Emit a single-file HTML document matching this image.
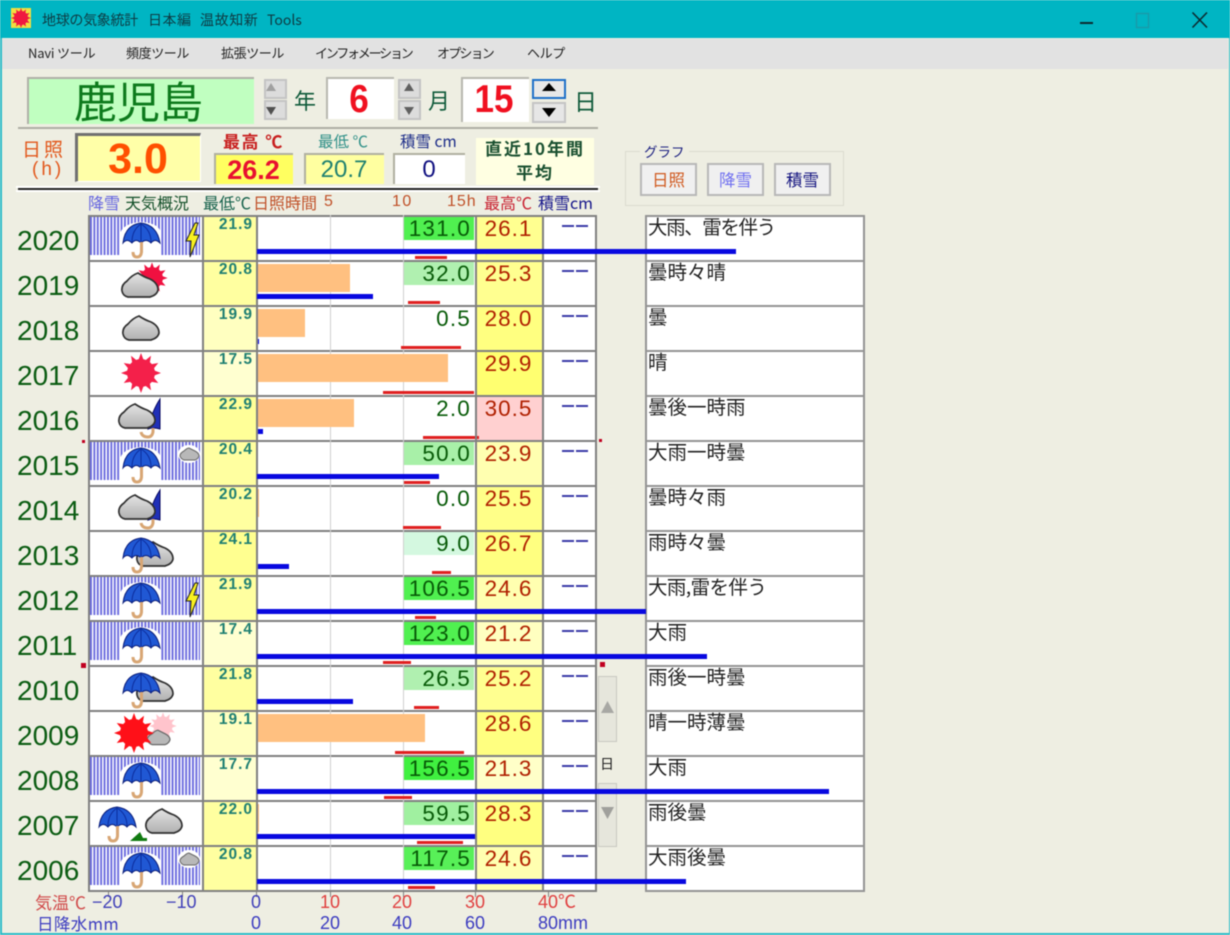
<!DOCTYPE html>
<html lang="ja">
<head>
<meta charset="utf-8">
<title>地球の気象統計 日本編 温故知新 Tools</title>
<style>
html,body{margin:0;padding:0;background:#eeeee2;}
#w{position:relative;width:1230px;height:935px;overflow:hidden;background:#eeeee2;font-family:"Liberation Sans","Noto Sans CJK JP",sans-serif;filter:blur(.4px);}
#w div,#w span.a{position:absolute;white-space:nowrap;}
.j{font-family:"Noto Sans CJK JP","Liberation Sans",sans-serif;}
.m{top:43px;font-size:13px;line-height:20px;color:#222;letter-spacing:-.4px;font-family:"Noto Sans CJK JP",sans-serif;}
.ti{top:11px;font-size:14px;line-height:18px;color:#0e3a42;font-family:"Noto Sans CJK JP","Liberation Sans",sans-serif;}
.spin{background:#dcdcdc;border:2px solid #c4c4c4;box-sizing:border-box;}
.h{top:193px;font-size:16px;line-height:18px;font-family:"Noto Sans CJK JP","Liberation Sans",sans-serif;}
.hn{top:193px;font-size:16px;line-height:18px;color:#c05028;letter-spacing:1.5px;}
.r{left:0;width:1230px;height:45px;}
.y{left:17px;top:10px;font-size:28px;line-height:30px;color:#0b5c12;}
.ic{left:88px;top:-1px;width:115px;height:46px;background:#fff;border-top:2px solid #808080;box-sizing:border-box;}
.mn{left:203px;top:-1px;width:53px;height:46px;border-top:2px solid #808080;box-sizing:border-box;}
.mn b{position:absolute;right:3px;top:-1px;font-size:15.5px;line-height:18px;color:#1f7f72;letter-spacing:1px;}
.ch{left:256px;top:-1px;width:219px;height:46px;background:#fff;border-top:2px solid #808080;box-sizing:border-box;}
.g1,.g2{top:-1px;width:1px;height:46px;background:#cfcfcf;}
.g1{left:330px}.g2{left:403px}
.gb{left:404px;top:1px;width:70px;height:23px;}
.gv{right:759px;top:0;font-size:22.5px;line-height:26px;color:#075a07;letter-spacing:1.2px;}
.mx{left:475px;top:-1px;width:67px;height:46px;border-top:2px solid #808080;box-sizing:border-box;text-align:center;font-size:22.5px;line-height:24px;color:#b02000;letter-spacing:1px;}
.sn{left:542px;top:-1px;width:53px;height:46px;background:#fff;border-top:2px solid #808080;box-sizing:border-box;}
.sn span{position:absolute;left:20px;top:4px;width:27px;height:8px;}
.sn span::before,.sn span::after{content:"";position:absolute;top:4px;width:12px;height:2px;background:#3a3aa8;}
.sn span::before{left:0}.sn span::after{left:14px}
.tx{left:645px;top:-1px;width:218px;height:46px;background:#fff;border-top:2px solid #949494;box-sizing:border-box;padding-left:3px;font-size:19.5px;line-height:17px;color:#222;font-family:"Noto Sans CJK JP",sans-serif;}
.or{left:257px;top:3px;height:28px;background:#ffc080;}
.bl{left:257px;top:33px;height:5px;background:#0808e0;}
.rd{top:40px;height:2.5px;background:#e02020;}
.v{width:2px;background:#808080;top:215px;height:677px;}
.t{width:1px;height:6px;top:891px;background:#808080;}
.l1,.l2{font-size:18px;line-height:20px;}
.l1{top:892px;color:#e04040;}
.l2{top:913px;color:#3c3cc0;}
.btn{top:163px;width:57px;height:33px;background:#f0f0f0;border:2px solid #b8b8b8;box-sizing:border-box;text-align:center;font-size:16.5px;line-height:29px;font-family:"Noto Sans CJK JP",sans-serif;}
.bb{left:257px;height:5px;background:#0808e0;}
</style>
</head>
<body>
<div id="w">
<!-- title bar -->
<div style="left:0;top:0;width:1230px;height:38px;background:#00b5c3;"></div>
<div style="left:11px;top:8px;width:20px;height:20px;background:#f0e040;"></div>
<svg style="position:absolute;left:11px;top:8px" width="20" height="20" viewBox="-20 -20 40 40"><circle r="14" fill="#f01840"/><polygon fill="#f01840" points="20,0 11.6,3.1 17.3,10 8.5,8.5 10,17.3 3.1,11.6 0,20 -3.1,11.6 -10,17.3 -8.5,8.5 -17.3,10 -11.6,3.1 -20,0 -11.6,-3.1 -17.3,-10 -8.5,-8.5 -10,-17.3 -3.1,-11.6 0,-20 3.1,-11.6 10,-17.3 8.5,-8.5 17.3,-10 11.6,-3.1"/></svg>
<div class="ti" style="left:42px;letter-spacing:-.3px;">地球の気象統計</div>
<div class="ti" style="left:148px;letter-spacing:.5px;">日本編</div>
<div class="ti" style="left:200px;letter-spacing:.6px;">温故知新</div>
<div class="ti" style="left:267px;">Tools</div>
<svg style="position:absolute;left:1070px;top:8px" width="150" height="30"><rect x="10" y="14" width="13" height="2" fill="#0c2a30"/><rect x="66.5" y="5.5" width="12" height="14" fill="none" stroke="#1a9aa8" stroke-width="1.4"/><path d="M122.5 4.5L137 19.5M137 4.5L122.5 19.5" stroke="#0c2a30" stroke-width="1.6" fill="none"/></svg>
<!-- menu -->
<div style="left:2px;top:39px;width:1226px;height:30px;background:#e2e2e2;"></div>
<div class="m" style="left:28px;letter-spacing:-.2px;">Navi ツール</div>
<div class="m" style="left:126px;">頻度ツール</div>
<div class="m" style="left:221px;">拡張ツール</div>
<div class="m" style="left:315px;letter-spacing:-2.2px;">インフォメーション</div>
<div class="m" style="left:437px;letter-spacing:-1.8px;">オプション</div>
<div class="m" style="left:527px;">ヘルプ</div>
<!-- window border -->
<div style="left:0;top:38px;width:1.5px;height:897px;background:#2cbcc8;z-index:9;"></div>
<div style="left:1228.5px;top:38px;width:1.5px;height:897px;background:#2cbcc8;z-index:9;"></div>
<div style="left:0;top:933px;width:1230px;height:2px;background:#2cbcc8;z-index:9;"></div>
<!-- station -->
<div style="left:27px;top:77px;width:227px;height:47px;background:#c0ffc0;border-top:2px solid #b0b0a8;border-left:2px solid #b0b0a8;box-sizing:border-box;"></div>
<div class="j" style="left:74px;top:72px;font-size:43px;line-height:56px;color:#0d7a1c;">鹿児島</div>
<!-- spins -->
<div class="spin" style="left:264px;top:79px;width:23px;height:20px;"></div>
<div class="spin" style="left:264px;top:100px;width:23px;height:20px;"></div>
<div style="left:326px;top:77px;width:68px;height:42px;background:#fff;border-top:2px solid #b8b8b0;border-left:2px solid #b8b8b0;box-sizing:border-box;"></div>
<div class="spin" style="left:398px;top:79px;width:23px;height:20px;"></div>
<div class="spin" style="left:398px;top:100px;width:23px;height:20px;"></div>
<div style="left:461px;top:77px;width:68px;height:45px;background:#fff;border-top:2px solid #b8b8b0;border-left:2px solid #b8b8b0;box-sizing:border-box;"></div>
<div style="left:532px;top:79px;width:34px;height:20px;background:#e8e8e8;border:2px solid #1e70c8;box-sizing:border-box;"></div>
<div class="spin" style="left:532px;top:102px;width:34px;height:21px;background:#e6e6e6;"></div>
<svg style="position:absolute;left:260px;top:75px" width="320" height="52">
<g fill="#a0a0a0"><path d="M11 8l5 8h-10z"/></g><g fill="#505050"><path d="M6 32h10l-5 8z"/></g>
<g fill="#606060"><path d="M149 8l5 8h-10z"/><path d="M144 32h10l-5 8z"/></g>
<g fill="#000"><path d="M289 8l7 8h-14z"/><path d="M282 33h14l-7 9z"/></g></svg>
<div class="j" style="left:294px;top:85px;font-size:22px;line-height:30px;color:#0f5a3a;">年</div>
<div style="left:326px;top:76px;width:66px;text-align:center;font-size:39px;line-height:48px;font-weight:bold;color:#f01020;transform:scaleX(.9);">6</div>
<div class="j" style="left:428px;top:85px;font-size:22px;line-height:30px;color:#0f5a3a;">月</div>
<div style="left:461px;top:76px;width:66px;text-align:center;font-size:39px;line-height:48px;font-weight:bold;color:#f01020;transform:scaleX(.9);">15</div>
<div class="j" style="left:574px;top:85px;font-size:23px;line-height:30px;color:#0f5a3a;">日</div>
<!-- separators -->
<div style="left:18px;top:127px;width:580px;height:2px;background:#aeaea4;"></div>
<div style="left:18px;top:188px;width:580px;height:2px;background:#222;"></div>
<div style="left:16px;top:190px;width:584px;height:2px;background:#fff;"></div>
<div style="left:16px;top:186px;width:584px;height:2px;background:#fff;"></div>
<!-- summary -->
<div class="j" style="left:22px;top:136px;font-size:19px;line-height:26px;color:#e2581c;letter-spacing:3px;">日照</div>
<div style="left:32px;top:158px;font-size:19px;line-height:24px;color:#e2581c;letter-spacing:3px;">(h)</div>
<div style="left:75px;top:133px;width:126px;height:49px;background:#ffffa8;border-top:3px solid #707070;border-left:3px solid #707070;border-right:1px solid #fff;border-bottom:1px solid #fff;box-sizing:border-box;"></div>
<div style="left:75px;top:134px;width:126px;text-align:center;font-size:43px;line-height:50px;font-weight:bold;color:#ff5000;">3.0</div>
<div class="j" style="left:223px;top:130px;font-size:17px;line-height:22px;font-weight:bold;color:#c81e1e;letter-spacing:1.5px;">最高 ℃</div>
<div style="left:214px;top:153px;width:79px;height:31px;background:#ffff60;border-top:2px solid #b0b0a0;border-left:2px solid #b0b0a0;box-sizing:border-box;"></div>
<div style="left:214px;top:155px;width:79px;text-align:center;font-size:27px;line-height:30px;font-weight:bold;color:#e81030;">26.2</div>
<div class="j" style="left:318px;top:130px;font-size:15.5px;line-height:22px;color:#2f9088;">最低 ℃</div>
<div style="left:304px;top:153px;width:80px;height:31px;background:#ffffa0;border-top:2px solid #b0b0a0;border-left:2px solid #b0b0a0;box-sizing:border-box;"></div>
<div style="left:304px;top:155px;width:80px;text-align:center;font-size:24px;line-height:30px;color:#1f8070;">20.7</div>
<div class="j" style="left:400px;top:130px;font-size:15.5px;line-height:22px;color:#1c2c88;">積雪 cm</div>
<div style="left:393px;top:153px;width:72px;height:31px;background:#fff;border-top:2px solid #b0b0a0;border-left:2px solid #b0b0a0;box-sizing:border-box;"></div>
<div style="left:393px;top:155px;width:72px;text-align:center;font-size:24px;line-height:30px;color:#101080;">0</div>
<div style="left:476px;top:138px;width:118px;height:47px;background:#ffffe2;"></div>
<div class="j" style="left:476px;top:136px;width:118px;text-align:center;font-size:17px;line-height:24px;font-weight:bold;color:#1a5030;letter-spacing:2px;">直近10年間</div>
<div class="j" style="left:476px;top:160px;width:118px;text-align:center;font-size:17px;line-height:24px;font-weight:bold;color:#1a5030;letter-spacing:2px;">平均</div>
<!-- graph group -->
<div style="left:625px;top:151px;width:219px;height:55px;border:1px solid #dcdcd0;box-sizing:border-box;"></div>
<div class="j" style="left:640px;top:142px;padding:0 4px;font-size:13.5px;line-height:18px;background:#eeeee2;color:#1c2080;">グラフ</div>
<div class="btn" style="left:640px;color:#d05a20;">日照</div>
<div class="btn" style="left:707px;color:#7070f0;">降雪</div>
<div class="btn" style="left:774px;color:#161680;">積雪</div>
<!-- column headers -->
<div class="h" style="left:88px;color:#6464e0;">降雪</div>
<div class="h" style="left:125px;color:#14502a;">天気概況</div>
<div class="h" style="left:203px;color:#14604a;">最低℃</div>
<div class="h" style="left:253px;color:#c05028;">日照時間</div>
<div class="hn" style="left:324px;">5</div>
<div class="hn" style="left:392px;">10</div>
<div class="hn" style="left:447px;letter-spacing:1px;">15h</div>
<div class="h" style="left:484px;color:#c81e2e;">最高℃</div>
<div class="h" style="left:538px;color:#14148a;">積雪cm</div>

<!-- rows -->
<div class="r" style="top:216px"><div class="y">2020</div><div class="ic"></div><div class="mn" style="background:#ffffa0"><b>21.9</b></div><div class="ch"></div><div class="g1"></div><div class="g2"></div><div class="gb" style="background:#50f050"></div><div class="gv">131.0</div><div class="mx" style="background:#ffff90">26.1</div><div class="sn"><span></span></div><div class="tx" style="letter-spacing:-1.4px">大雨、雷を伴う</div><div class="rd" style="left:415px;width:32px"></div></div>
<div class="r" style="top:261px"><div class="y">2019</div><div class="ic"></div><div class="mn" style="background:#ffffa0"><b>20.8</b></div><div class="ch"></div><div class="g1"></div><div class="g2"></div><div class="or" style="width:93px"></div><div class="gb" style="background:#b0f0b0"></div><div class="gv">32.0</div><div class="mx" style="background:#ffff90">25.3</div><div class="sn"><span></span></div><div class="tx">曇時々晴</div><div class="rd" style="left:408px;width:32px"></div></div>
<div class="r" style="top:306px"><div class="y">2018</div><div class="ic"></div><div class="mn" style="background:#ffffc0"><b>19.9</b></div><div class="ch"></div><div class="g1"></div><div class="g2"></div><div class="or" style="width:48px"></div><div class="gv">0.5</div><div class="mx" style="background:#ffff80">28.0</div><div class="sn"><span></span></div><div class="tx">曇</div><div class="bl" style="width:2px"></div><div class="rd" style="left:401px;width:60px"></div></div>
<div class="r" style="top:351px"><div class="y">2017</div><div class="ic"></div><div class="mn" style="background:#ffffd0"><b>17.5</b></div><div class="ch"></div><div class="g1"></div><div class="g2"></div><div class="or" style="width:191px"></div><div class="mx" style="background:#ffff70">29.9</div><div class="sn"><span></span></div><div class="tx">晴</div><div class="rd" style="left:383px;width:91px"></div></div>
<div class="r" style="top:396px"><div class="y">2016</div><div class="ic"></div><div class="mn" style="background:#ffff98"><b>22.9</b></div><div class="ch"></div><div class="g1"></div><div class="g2"></div><div class="or" style="width:97px"></div><div class="gv">2.0</div><div class="mx" style="background:#ffd0d0">30.5</div><div class="sn"><span></span></div><div class="tx">曇後一時雨</div><div class="bl" style="width:6px"></div><div class="rd" style="left:423px;width:56px"></div></div>
<div class="r" style="top:441px"><div class="y">2015</div><div class="ic"></div><div class="mn" style="background:#ffffa0"><b>20.4</b></div><div class="ch"></div><div class="g1"></div><div class="g2"></div><div class="gb" style="background:#a8f0a8"></div><div class="gv">50.0</div><div class="mx" style="background:#ffffb0">23.9</div><div class="sn"><span></span></div><div class="tx">大雨一時曇</div><div class="rd" style="left:404px;width:26px"></div></div>
<div class="r" style="top:486px"><div class="y">2014</div><div class="ic"></div><div class="mn" style="background:#ffffa0"><b>20.2</b></div><div class="ch"></div><div class="g1"></div><div class="g2"></div><div class="or" style="width:2px"></div><div class="gv">0.0</div><div class="mx" style="background:#ffff88">25.5</div><div class="sn"><span></span></div><div class="tx">曇時々雨</div><div class="rd" style="left:403px;width:38px"></div></div>
<div class="r" style="top:531px"><div class="y">2013</div><div class="ic"></div><div class="mn" style="background:#ffff90"><b>24.1</b></div><div class="ch"></div><div class="g1"></div><div class="g2"></div><div class="gb" style="background:#d4f8e0"></div><div class="gv">9.0</div><div class="mx" style="background:#ffff80">26.7</div><div class="sn"><span></span></div><div class="tx">雨時々曇</div><div class="bl" style="width:32px"></div><div class="rd" style="left:432px;width:19px"></div></div>
<div class="r" style="top:576px"><div class="y">2012</div><div class="ic"></div><div class="mn" style="background:#ffffa0"><b>21.9</b></div><div class="ch"></div><div class="g1"></div><div class="g2"></div><div class="gb" style="background:#50f050"></div><div class="gv">106.5</div><div class="mx" style="background:#ffffb0">24.6</div><div class="sn"><span></span></div><div class="tx" style="letter-spacing:-.6px">大雨,雷を伴う</div><div class="rd" style="left:415px;width:21px"></div></div>
<div class="r" style="top:621px"><div class="y">2011</div><div class="ic"></div><div class="mn" style="background:#ffffd0"><b>17.4</b></div><div class="ch"></div><div class="g1"></div><div class="g2"></div><div class="gb" style="background:#50f050"></div><div class="gv">123.0</div><div class="mx" style="background:#ffffc0">21.2</div><div class="sn"><span></span></div><div class="tx">大雨</div><div class="rd" style="left:383px;width:28px"></div></div>
<div class="r" style="top:666px"><div class="y">2010</div><div class="ic"></div><div class="mn" style="background:#ffffa0"><b>21.8</b></div><div class="ch"></div><div class="g1"></div><div class="g2"></div><div class="gb" style="background:#b0f0b0"></div><div class="gv">26.5</div><div class="mx" style="background:#ffff90">25.2</div><div class="sn"><span></span></div><div class="tx">雨後一時曇</div><div class="rd" style="left:414px;width:25px"></div></div>
<div class="r" style="top:711px"><div class="y">2009</div><div class="ic"></div><div class="mn" style="background:#ffffc0"><b>19.1</b></div><div class="ch"></div><div class="g1"></div><div class="g2"></div><div class="or" style="width:168px"></div><div class="mx" style="background:#ffff80">28.6</div><div class="sn"><span></span></div><div class="tx">晴一時薄曇</div><div class="rd" style="left:395px;width:69px"></div></div>
<div class="r" style="top:756px"><div class="y">2008</div><div class="ic"></div><div class="mn" style="background:#ffffd0"><b>17.7</b></div><div class="ch"></div><div class="g1"></div><div class="g2"></div><div class="gb" style="background:#40f040"></div><div class="gv">156.5</div><div class="mx" style="background:#ffffc8">21.3</div><div class="sn"><span></span></div><div class="tx">大雨</div><div class="rd" style="left:384px;width:28px"></div></div>
<div class="r" style="top:801px"><div class="y">2007</div><div class="ic"></div><div class="mn" style="background:#ffffa0"><b>22.0</b></div><div class="ch"></div><div class="g1"></div><div class="g2"></div><div class="or" style="width:2px"></div><div class="gb" style="background:#a0f0a0"></div><div class="gv">59.5</div><div class="mx" style="background:#ffff80">28.3</div><div class="sn"><span></span></div><div class="tx">雨後曇</div><div class="rd" style="left:417px;width:46px"></div></div>
<div class="r" style="top:846px"><div class="y">2006</div><div class="ic"></div><div class="mn" style="background:#ffffa0"><b>20.8</b></div><div class="ch"></div><div class="g1"></div><div class="g2"></div><div class="or" style="width:1px"></div><div class="gb" style="background:#58f058"></div><div class="gv">117.5</div><div class="mx" style="background:#ffffb0">24.6</div><div class="sn"><span></span></div><div class="tx">大雨後曇</div><div class="rd" style="left:408px;width:27px"></div></div>

<!-- vertical frame lines -->
<div class="v" style="left:88px"></div>
<div class="v" style="left:202px"></div>
<div class="v" style="left:255.5px"></div>
<div class="v" style="left:474.5px"></div>
<div class="v" style="left:541.5px"></div>
<div class="v" style="left:595px"></div>
<div class="v" style="left:644.5px;background:#949494"></div>
<div class="v" style="left:862.5px;background:#949494"></div>
<div style="left:88px;top:890px;width:509px;height:2px;background:#808080;"></div>
<div style="left:645px;top:890px;width:219px;height:2px;background:#949494;"></div>

<!-- side scroller -->
<div style="left:598px;top:676px;width:19px;height:66px;background:#e6e6dc;border:1px solid #c8c8c0;box-sizing:border-box;"></div>
<div style="left:598px;top:783px;width:19px;height:64px;background:#e6e6dc;border:1px solid #c8c8c0;box-sizing:border-box;"></div>
<svg style="position:absolute;left:598px;top:695px" width="20" height="135"><path d="M3 18L9.5 6 16 18z" fill="#a8a8a4"/><path d="M3 112H16L9.5 124z" fill="#a0a09c"/></svg>
<div class="j" style="left:600px;top:754px;font-size:14px;line-height:20px;color:#222;">日</div>

<!-- precipitation bars above everything -->
<div class="bb" style="top:249px;width:479px"></div>
<div class="bb" style="top:294px;width:116px"></div>
<div class="bb" style="top:474px;width:182px"></div>
<div class="bb" style="top:609px;width:389px"></div>
<div class="bb" style="top:654px;width:450px"></div>
<div class="bb" style="top:699px;width:96px"></div>
<div class="bb" style="top:789px;width:572px"></div>
<div class="bb" style="top:834px;width:218px"></div>
<div class="bb" style="top:879px;width:429px"></div>

<!-- weather icons -->
<svg style="position:absolute;left:0;top:0" width="1230" height="935">
<defs>
<pattern id="st" width="3.4" height="10" patternUnits="userSpaceOnUse"><rect width="1.9" height="10" fill="#6a6ade"/></pattern>
<linearGradient id="cg" x1="0" y1="0" x2="0" y2="1"><stop offset="0" stop-color="#e4e4e4"/><stop offset="1" stop-color="#b0b0b0"/></linearGradient>
<symbol id="rain" width="112" height="40" overflow="visible"><rect x="0" y="0" width="110" height="38" fill="url(#st)"/><path d="M30 38V16Q34 6 51 5 69 6 71 16V38z" fill="#fff"/></symbol>
<symbol id="umb" width="40" height="38" overflow="visible"><path d="M1 21Q3 3 19 1 35 3 38 21 33 16 29 21 24 16 19 21 14 16 10 21 5 16 1 21z" fill="#2058d4" stroke="#0a1c78" stroke-width="1"/><path d="M19 2V20M19 2Q10 8 10 20M19 2Q29 8 29 20" stroke="#0c2c9c" fill="none"/><path d="M19.5 20V30Q19 35 15 35 11 35 11 30" stroke="#d8a674" stroke-width="3" fill="none"/></symbol>
<symbol id="cld" width="40" height="28" overflow="visible"><path d="M2 19Q1 13 7 9 12 3 18 1 24 5 30 7 38 11 38 18 37 23 30 25L8 25Q3 24 2 19z" fill="url(#cg)" stroke="#303030" stroke-width="1.7"/></symbol>
<symbol id="scld" width="22" height="14" overflow="visible"><path d="M1 9Q1 6 5 4 8 1 10 1 14 3 16 4 20 6 20 9 19 12 16 13H5Q2 12 1 9z" fill="#b8b8b8" stroke="#666" stroke-width="1"/></symbol>
<symbol id="bolt" width="14" height="36" overflow="visible"><path d="M9 1L0 19 5 19 4 35 13 13 8 13 12 1z" fill="#f8f020" stroke="#222" stroke-width="1"/></symbol>
<symbol id="half" width="14" height="44" overflow="visible"><path d="M12 0V30Q5 28 0 30Q4 12 12 0z" fill="#2030b8" stroke="#0a0a60"/><path d="M5 29V33Q4 38 0 38-6 38-7 33" stroke="#d8a674" stroke-width="3" fill="none"/></symbol>
<g id="sun"><circle r="14"/><polygon points="20,0 11.6,3.1 17.3,10 8.5,8.5 10,17.3 3.1,11.6 0,20 -3.1,11.6 -10,17.3 -8.5,8.5 -17.3,10 -11.6,3.1 -20,0 -11.6,-3.1 -17.3,-10 -8.5,-8.5 -10,-17.3 -3.1,-11.6 0,-20 3.1,-11.6 10,-17.3 8.5,-8.5 17.3,-10 11.6,-3.1"/></g>
</defs>
<!-- 2020 -->
<use href="#rain" x="90" y="217"/><use href="#umb" x="122" y="222"/><use href="#bolt" x="186" y="222"/>
<!-- 2019 -->
<use href="#sun" fill="#f01040" transform="translate(152 278) scale(.78)"/><use href="#cld" x="120" y="272"/>
<!-- 2018 -->
<use href="#cld" x="121" y="315"/>
<!-- 2017 -->
<use href="#sun" fill="#f4204a" transform="translate(141 373)"/>
<!-- 2016 -->
<use href="#half" x="148" y="399"/><use href="#cld" x="117" y="403"/>
<!-- 2015 -->
<use href="#rain" x="90" y="442"/><use href="#umb" x="122" y="447"/><ellipse cx="189" cy="454" rx="11" ry="9" fill="#fff"/><use href="#scld" x="179" y="447"/>
<!-- 2014 -->
<use href="#half" x="148" y="490"/><use href="#cld" x="117" y="494"/>
<!-- 2013 -->
<use href="#cld" x="135" y="541"/><use href="#umb" x="122" y="537"/>
<!-- 2012 -->
<use href="#rain" x="90" y="577"/><use href="#umb" x="122" y="582"/><use href="#bolt" x="186" y="582"/>
<!-- 2011 -->
<use href="#rain" x="90" y="622"/><use href="#umb" x="122" y="627"/>
<!-- 2010 -->
<use href="#cld" x="135" y="676"/><use href="#umb" x="122" y="672"/>
<!-- 2009 -->
<use href="#sun" fill="#ffc4cc" transform="translate(163 726) scale(.68)"/><use href="#scld" transform="translate(146 729) scale(1.2)"/><use href="#sun" fill="#ff1018" transform="translate(134 733)"/>
<!-- 2008 -->
<use href="#rain" x="90" y="757"/><use href="#umb" x="122" y="762"/>
<!-- 2007 -->
<use href="#umb" x="98" y="806"/><use href="#cld" x="144" y="808"/><path d="M130 841L140 832 143 838H147V841z" fill="#107a10"/>
<!-- 2006 -->
<use href="#rain" x="90" y="847"/><use href="#umb" x="122" y="852"/><ellipse cx="189" cy="859" rx="11" ry="9" fill="#fff"/><use href="#scld" x="179" y="852"/>
</svg>

<!-- red dots -->
<div style="left:82px;top:440px;width:3px;height:3px;background:#c00020;"></div>
<div style="left:599px;top:439px;width:3px;height:3px;background:#c00020;"></div>
<div style="left:81px;top:663px;width:5px;height:5px;background:#c00020;"></div>
<div style="left:600px;top:662px;width:5px;height:5px;background:#c00020;"></div>
<!-- axis -->
<div class="t" style="left:108px"></div><div class="t" style="left:182px"></div><div class="t" style="left:256px"></div><div class="t" style="left:330px"></div><div class="t" style="left:403px"></div><div class="t" style="left:475px"></div><div class="t" style="left:548px"></div>
<div class="l1 j" style="left:35px;color:#d04848;font-size:17px;">気温℃</div>
<div class="l1" style="left:92px;color:#4040b8;">−20</div>
<div class="l1" style="left:166px;color:#4040b8;">−10</div>
<div class="l1" style="left:251px;color:#4040b8;">0</div>
<div class="l1" style="left:320px;">10</div>
<div class="l1" style="left:392px;">20</div>
<div class="l1" style="left:465px;">30</div>
<div class="l1" style="left:538px;">40℃</div>
<div class="l2 j" style="left:37px;font-size:16.5px;letter-spacing:.4px;">日降水mm</div>
<div class="l2" style="left:251px;">0</div>
<div class="l2" style="left:320px;">20</div>
<div class="l2" style="left:392px;">40</div>
<div class="l2" style="left:465px;">60</div>
<div class="l2" style="left:538px;">80mm</div>
</div>
</body>
</html>
